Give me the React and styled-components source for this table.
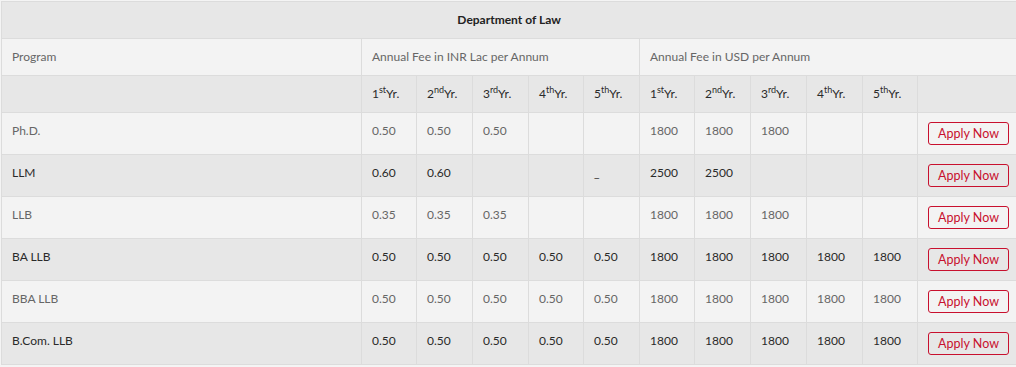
import React from 'react';
import styled, {createGlobalStyle} from "styled-components";

const GlobalStyle = createGlobalStyle`
  body {
    margin: 0;
    background: #f4f4f4;
    font-family: Lato, "Open Sans", sans-serif;
  }
`;

const yearLabels = [
  ['1', 'st'], ['2', 'nd'], ['3', 'rd'], ['4', 'th'], ['5', 'th']
]

const programs = [
  {name: 'Ph.D.', inr: ['0.50', '0.50', '0.50', '', ''], usd: ['1800', '1800', '1800', '', '']},
  {name: 'LLM', inr: ['0.60', '0.60', '', '', '_'], usd: ['2500', '2500', '', '', '']},
  {name: 'LLB', inr: ['0.35', '0.35', '0.35', '', ''], usd: ['1800', '1800', '1800', '', '']},
  {name: 'BA LLB', inr: ['0.50', '0.50', '0.50', '0.50', '0.50'], usd: ['1800', '1800', '1800', '1800', '1800']},
  {name: 'BBA LLB', inr: ['0.50', '0.50', '0.50', '0.50', '0.50'], usd: ['1800', '1800', '1800', '1800', '1800']},
  {name: 'B.Com. LLB', inr: ['0.50', '0.50', '0.50', '0.50', '0.50'], usd: ['1800', '1800', '1800', '1800', '1800']},
]

const colWidths = [360, 55, 56, 56, 55, 56, 55, 56, 56, 56, 55, 99]

const App = () => {
  return (
    <>
      <GlobalStyle/>
      <FeeTable>
        <colgroup>
          {colWidths.map((w, i) => <col key={i} style={{width: w}}/>)}
        </colgroup>
        <tbody>
          <Row $dark>
            <TitleCell colSpan={12}>Department of Law</TitleCell>
          </Row>
          <Row>
            <Cell>Program</Cell>
            <Cell colSpan={5}>Annual Fee in INR Lac per Annum</Cell>
            <Cell colSpan={6}>Annual Fee in USD per Annum</Cell>
          </Row>
          <Row $dark>
            <Cell/>
            {[...yearLabels, ...yearLabels].map(([n, s], i) => (
              <Cell key={i}>{n}<sup>{s}</sup>Yr.</Cell>
            ))}
            <Cell/>
          </Row>
          {programs.map((p, idx) => (
            <DataRow key={p.name} $dark={idx % 2 === 1}>
              <Cell>{p.name}</Cell>
              {p.inr.map((v, i) => <Cell key={'i' + i}>{v}</Cell>)}
              {p.usd.map((v, i) => <Cell key={'u' + i}>{v}</Cell>)}
              <Cell>
                <ApplyButton>Apply Now</ApplyButton>
              </Cell>
            </DataRow>
          ))}
        </tbody>
      </FeeTable>
    </>
  );
};

export default App;

const FeeTable = styled.table`
  table-layout: fixed;
  border-collapse: collapse;
  width: 1016px;
  margin: 1px 0 0 1px;
  font-size: 12px;
`;

const Row = styled.tr`
  background: ${p => p.$dark ? '#e7e7e7' : '#f3f3f3'};
  color: ${p => p.$dark ? '#2a2a2a' : '#666'};
`;

const DataRow = styled(Row)`
  > td {
    height: 25px;
  }
`;

const Cell = styled.td`
  border: 1px solid #dcdcdc;
  padding: 8px 10px;
  line-height: 20px;
  vertical-align: top;
  white-space: nowrap;

  > sup {
    font-size: 9px;
    line-height: 0;
    vertical-align: 5px;
  }
`;

const TitleCell = styled(Cell)`
  text-align: center;
  font-weight: 700;
  color: #222;
`;

const ApplyButton = styled.button`
  display: block;
  margin: 1px 0 0 0;
  width: 81px;
  height: 23px;
  padding: 0;
  border: 1px solid #c8102e;
  border-radius: 3px;
  background: transparent;
  color: #c8102e;
  font-family: Lato, "Open Sans", sans-serif;
  font-size: 12.5px;
  cursor: pointer;
`;
